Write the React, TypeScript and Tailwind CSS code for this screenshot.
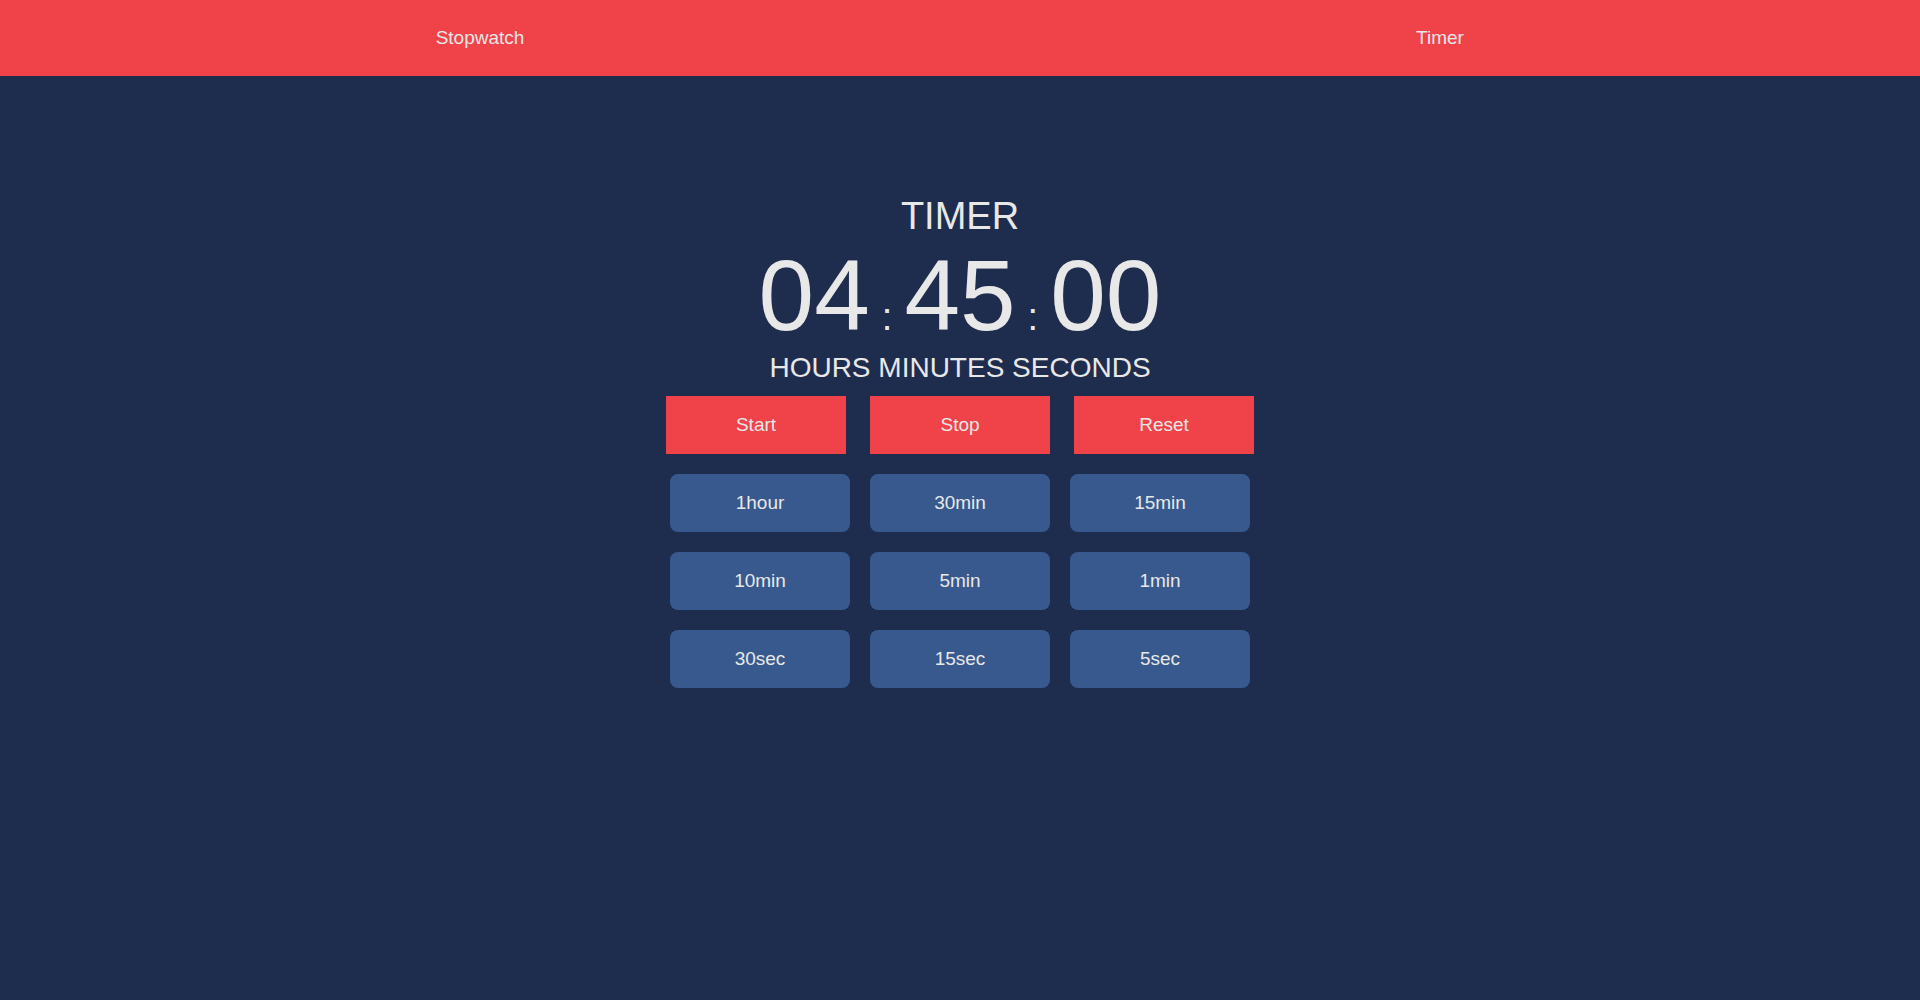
import { useEffect, useState } from "react";

const PRESETS = [
  { label: "1hour", seconds: 3600 },
  { label: "30min", seconds: 1800 },
  { label: "15min", seconds: 900 },
  { label: "10min", seconds: 600 },
  { label: "5min", seconds: 300 },
  { label: "1min", seconds: 60 },
  { label: "30sec", seconds: 30 },
  { label: "15sec", seconds: 15 },
  { label: "5sec", seconds: 5 },
];

const pad = (n: number) => String(n).padStart(2, "0");

export default function App() {
  const [tab, setTab] = useState<"stopwatch" | "timer">("timer");
  const [remaining, setRemaining] = useState(4 * 3600 + 45 * 60);
  const [running, setRunning] = useState(false);

  useEffect(() => {
    if (!running) return;
    const id = setInterval(() => {
      setRemaining((r) => {
        if (r <= 1) {
          setRunning(false);
          return 0;
        }
        return r - 1;
      });
    }, 1000);
    return () => clearInterval(id);
  }, [running]);

  const hours = Math.floor(remaining / 3600);
  const minutes = Math.floor((remaining % 3600) / 60);
  const seconds = remaining % 60;

  return (
    <div className="min-h-screen bg-[#1e2c4e] font-['Liberation_Sans',Arial,sans-serif] text-[#e8e8e8]">
      <nav className="flex h-[76px] bg-[#ef4249]">
        <button
          onClick={() => setTab("stopwatch")}
          className="flex flex-1 items-center justify-center text-[19px]"
        >
          Stopwatch
        </button>
        <button
          onClick={() => setTab("timer")}
          className="flex flex-1 items-center justify-center text-[19px]"
        >
          Timer
        </button>
      </nav>

      {tab === "timer" && (
        <main className="flex flex-col items-center pt-[121px]">
          <h1 className="text-[38px] leading-none">TIMER</h1>
          <div className="mt-[10px] text-[100px] leading-none">
            <span>{pad(hours)}</span>
            <span className="mx-3 text-[38px] leading-none">:</span>
            <span>{pad(minutes)}</span>
            <span className="mx-3 text-[38px] leading-none">:</span>
            <span>{pad(seconds)}</span>
          </div>
          <p className="mt-[9px] text-[28px] leading-none">
            HOURS MINUTES SECONDS
          </p>

          <div className="mt-[14px] flex gap-6">
            <button
              onClick={() => remaining > 0 && setRunning(true)}
              className="h-[58px] w-[180px] bg-[#ef4249] text-[19px]"
            >
              Start
            </button>
            <button
              onClick={() => setRunning(false)}
              className="h-[58px] w-[180px] bg-[#ef4249] text-[19px]"
            >
              Stop
            </button>
            <button
              onClick={() => {
                setRunning(false);
                setRemaining(0);
              }}
              className="h-[58px] w-[180px] bg-[#ef4249] text-[19px]"
            >
              Reset
            </button>
          </div>

          <div className="mt-5 grid w-[580px] grid-cols-3 gap-5">
            {PRESETS.map((p) => (
              <button
                key={p.label}
                onClick={() => setRemaining((r) => r + p.seconds)}
                className="h-[58px] rounded-lg bg-[#37598d] text-[19px]"
              >
                {p.label}
              </button>
            ))}
          </div>
        </main>
      )}
    </div>
  );
}
